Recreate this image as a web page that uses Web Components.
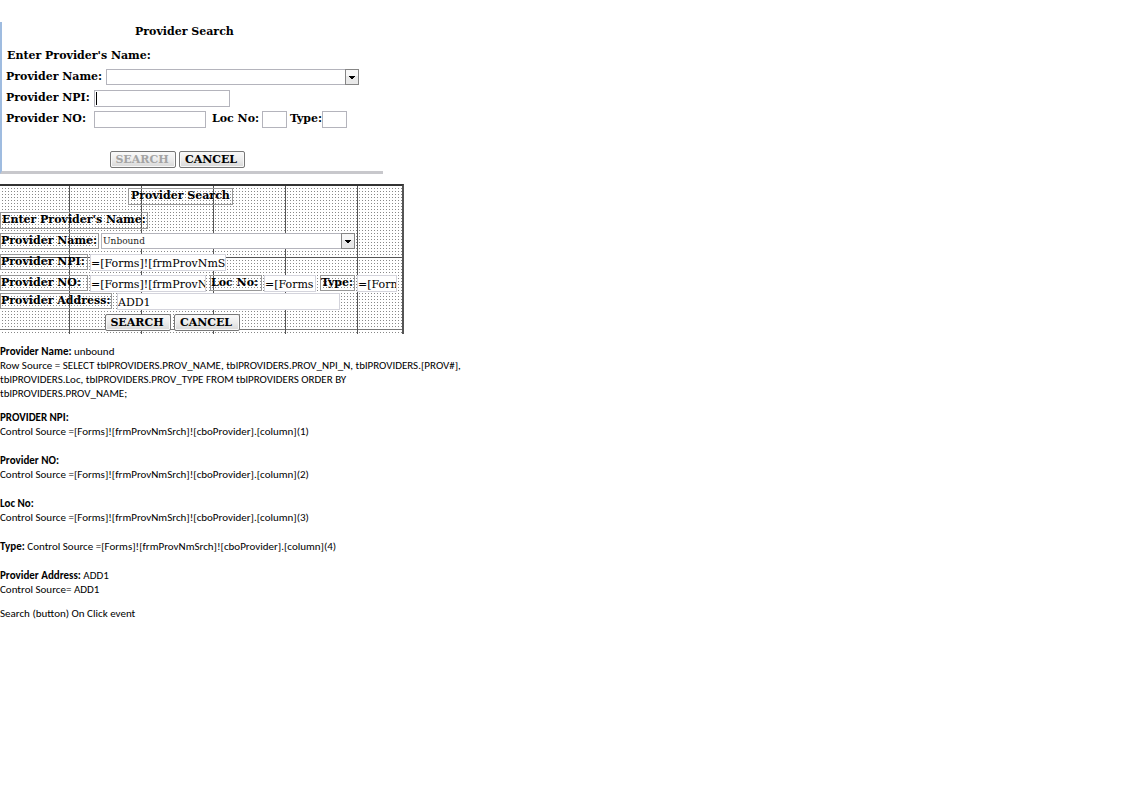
<!DOCTYPE html>
<html lang="en">
<head>
<meta charset="utf-8">
<title>Provider Search</title>
<style>
  body { margin: 0; background: #fff; color: #000; font: 11px/14px "DejaVu Serif", serif; }
</style>
</head>
<body>
<provider-page></provider-page>

<script>
const define = (name, html, setup) => {
  const template = document.createElement('template');
  template.innerHTML = html;
  customElements.define(name, class extends HTMLElement {
    constructor() {
      super();
      this.attachShadow({ mode: 'open' }).append(template.content.cloneNode(true));
    }
    connectedCallback() { if (setup) setup(this, this.shadowRoot); }
  });
};

/* Label tied to a text box */
define('text-field', `
  <style>
    :host { display: flex; align-items: flex-start; gap: var(--gap, 2px); height: 17px; }
    label { box-sizing: border-box; flex: none; width: var(--label, 87px); height: 16px; font-weight: bold;
            line-height: 14px; white-space: nowrap; border: 1px solid transparent; }
    :host([framed]) label { border-color: #999; }
    input { box-sizing: border-box; flex: none; width: var(--box, 136px); height: 17px; margin: 0;
            padding: 0; border: 1px solid #b4b4bc; border-radius: 0; background: #fff; color: #000;
            font: 11px/14px "DejaVu Serif", serif; outline: none; }
    :host([framed]) input { border-color: #d4d4dc; padding-top: 1px; }
    :host([active]) input { background: linear-gradient(#000, #000) 1px 1px / 1px 13px no-repeat #fff; }
  </style>
  <label for="box"></label><input id="box" type="text">`,
  (el, root) => {
    root.querySelector('label').textContent = el.getAttribute('label');
    root.querySelector('input').value = el.getAttribute('value') || '';
  });

/* Label tied to a drop-down */
define('select-field', `
  <style>
    :host { display: flex; align-items: flex-start; gap: 2px; height: 17px; }
    label { box-sizing: border-box; flex: none; width: var(--label, 99px); height: 16px; font-weight: bold;
            line-height: 14px; white-space: nowrap; border: 1px solid transparent; }
    :host([framed]) label { border-color: #999; }
    .combo { display: grid; flex: none; width: var(--box, 253px); height: 16px; }
    select, svg { grid-area: 1 / 1; }
    select { box-sizing: border-box; width: 100%; height: 16px; margin: 0; padding: 0 14px 0 1px; appearance: none;
             border: 1px solid #b4b4bc; border-radius: 0; background: #fff; color: #222;
             font: 9px/14px "DejaVu Serif", serif; outline: none; }
    svg { justify-self: end; pointer-events: none; }
  </style>
  <label for="combo"></label>
  <div class="combo">
    <select id="combo"><option></option></select>
    <svg width="14" height="16" viewBox="0 0 14 16" aria-hidden="true">
      <rect x=".5" y=".5" width="13" height="15" fill="#e9e9e9" stroke="#858585"/>
      <rect x="1" y="1" width="12" height="6" fill="#f7f7f7"/>
      <path d="M4 7h6v1H9v1H8v1H6V9H5V8H4z" fill="#000"/>
    </svg>
  </div>`,
  (el, root) => {
    root.querySelector('label').textContent = el.getAttribute('label');
    root.querySelector('option').textContent = el.getAttribute('value') || '';
  });

define('push-button', `
  <style>
    :host { display: block; }
    button { box-sizing: border-box; display: block; width: 66px; height: 17px; margin: 0; padding: 0 2px 0 0;
             border: 1px solid #777; border-radius: 2px; background: linear-gradient(#fafafa, #ececec 50%, #d8d8d8);
             color: #000; box-shadow: inset 0 0 0 1px #f8f8f8; font: bold 11px/14px "DejaVu Serif", serif; }
    button:disabled { color: #a4a4a4; }
  </style>
  <button type="button"><slot></slot></button>`,
  (el, root) => { root.querySelector('button').disabled = el.hasAttribute('disabled'); });

/* The running form */
define('search-form', `
  <style>
    :host { display: block; box-sizing: border-box; width: 100%; max-width: 383px; padding-bottom: 3px;
            border-left: 2px solid #9fbce0; border-bottom: 3px solid #c8c8cc; }
    form { display: grid; gap: 4px; padding: 3px 0 0 3px; }
    h2 { margin: 0; padding-left: 130px; font: bold 11px/14px "DejaVu Serif", serif; }
    p { margin: 6px 0 2px; padding-left: 2px; font-weight: bold; }
    .row { display: flex; }
    .row.buttons { gap: 3px; padding: 19px 0 0 105px; }
    .no { --box: 112px; }
    .loc { --label: 51px; --gap: 0px; --box: 25px; margin-left: 5px; }
    .type { --label: 33px; --gap: 0px; --box: 25px; margin-left: 2px; }
  </style>
  <form>
    <h2>Provider Search</h2>
    <p>Enter Provider's Name:</p>
    <select-field label="Provider Name:"></select-field>
    <text-field label="Provider NPI:" active></text-field>
    <div class="row">
      <text-field class="no" label="Provider NO:"></text-field>
      <text-field class="loc" label="Loc No:"></text-field>
      <text-field class="type" label="Type:"></text-field>
    </div>
    <div class="row buttons">
      <push-button disabled>SEARCH</push-button>
      <push-button>CANCEL</push-button>
    </div>
  </form>`);

/* The same form on the designer's dotted grid */
define('design-form', `
  <style>
    :host { display: block; box-sizing: border-box; width: 100%; max-width: 404px; padding-bottom: 3px;
            border-top: 2px solid #333; border-right: 2px solid #555;
            background:
              repeating-linear-gradient(90deg, transparent 0 69px, #555 69px 70px, transparent 70px 72px),
              linear-gradient(#555, #555) 0 71px / 100% 1px no-repeat,
              linear-gradient(#777, #777) 0 143px / 100% 1px no-repeat,
              linear-gradient(90deg, #fff 2px, transparent 2px) 0 0 / 3px 3px,
              linear-gradient(#fff 2px, #888 2px) 0 0 / 3px 3px; }
    form { display: grid; gap: 4px; padding-top: 2px; }
    h2, p { box-sizing: border-box; width: fit-content; height: 17px; margin: 0; padding: 0 1px; border: 1px solid #999;
            font: bold 11px/14px "DejaVu Serif", serif; }
    h2 { margin: 0 0 3px 128px; padding: 0 2px; }
    .row { display: flex; }
    .buttons { gap: 3px; padding-left: 105px; }
    select-field { --box: 254px; }
    text-field { --label: 88px; }
    .no { --box: 116px; }
    .loc { --label: 52px; --box: 52px; margin-left: 4px; }
    .type { --label: 35px; --box: 40px; margin-left: 4px; }
    .lower { display: grid; gap: 4px; margin-top: -3px; }
    .address { --label: 112px; --gap: 5px; --box: 223px; }
  </style>
  <form>
    <h2>Provider Search</h2>
    <p>Enter Provider's Name:</p>
    <select-field framed label="Provider Name:" value="Unbound"></select-field>
    <text-field framed label="Provider NPI:" value="=[Forms]![frmProvNmS"></text-field>
    <div class="row">
      <text-field framed class="no" label="Provider NO:" value="=[Forms]![frmProvN"></text-field>
      <text-field framed class="loc" label="Loc No:" value="=[Forms"></text-field>
      <text-field framed class="type" label="Type:" value="=[Forn"></text-field>
    </div>
    <div class="lower">
      <text-field framed class="address" label="Provider Address:" value="ADD1"></text-field>
      <div class="row buttons">
        <push-button>SEARCH</push-button>
        <push-button>CANCEL</push-button>
      </div>
    </div>
  </form>`);

define('source-notes', `
  <style>
    :host { display: flex; flex-direction: column; gap: 15px; max-width: 468px;
            font: 11px/14px Carlito, Calibri, Lato, sans-serif; }
  </style>
  <slot></slot>`);

define('provider-page', `
  <style>
    :host { display: block; padding-top: 22px; }
    design-form { margin-top: 10px; }
    source-notes { margin-top: 11px; }
    p { margin: 0; }
    .near { margin-top: -5px; }
  </style>
  <search-form></search-form>
  <design-form></design-form>
  <source-notes>
    <p><b>Provider Name:</b> unbound<br>Row Source = SELECT tblPROVIDERS.PROV_NAME, tblPROVIDERS.PROV_NPI_N, tblPROVIDERS.[PROV#], tblPROVIDERS.Loc, tblPROVIDERS.PROV_TYPE FROM tblPROVIDERS ORDER BY tblPROVIDERS.PROV_NAME;</p>
    <p class="near"><b>PROVIDER NPI:</b><br>Control Source =[Forms]![frmProvNmSrch]![cboProvider].[column](1)</p>
    <p><b>Provider NO:</b><br>Control Source =[Forms]![frmProvNmSrch]![cboProvider].[column](2)</p>
    <p><b>Loc No:</b><br>Control Source =[Forms]![frmProvNmSrch]![cboProvider].[column](3)</p>
    <p><b>Type:</b> Control Source =[Forms]![frmProvNmSrch]![cboProvider].[column](4)</p>
    <p><b>Provider Address:</b> ADD1<br>Control Source= ADD1</p>
    <p class="near">Search (button) On Click event</p>
  </source-notes>`);
</script>
</body>
</html>
